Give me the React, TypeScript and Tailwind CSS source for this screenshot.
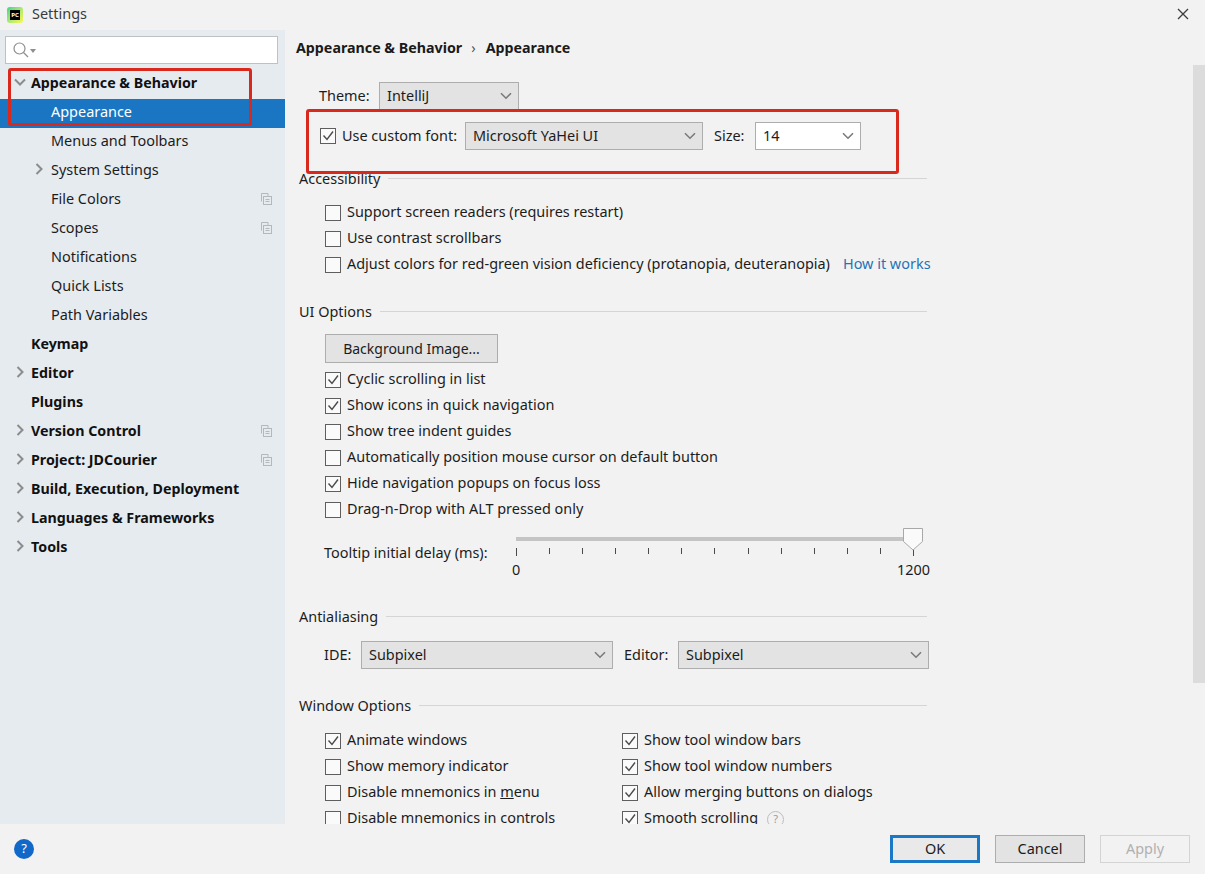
const sans = "font-['Noto_Sans','Open_Sans',sans-serif]";

type NavItem = { label: string; bold?: boolean; arrow?: "right" | "down"; indent?: boolean; copy?: boolean; selected?: boolean };

const navItems: NavItem[] = [
  { label: "Appearance & Behavior", bold: true, arrow: "down" },
  { label: "Appearance", indent: true, selected: true },
  { label: "Menus and Toolbars", indent: true },
  { label: "System Settings", indent: true, arrow: "right" },
  { label: "File Colors", indent: true, copy: true },
  { label: "Scopes", indent: true, copy: true },
  { label: "Notifications", indent: true },
  { label: "Quick Lists", indent: true },
  { label: "Path Variables", indent: true },
  { label: "Keymap", bold: true },
  { label: "Editor", bold: true, arrow: "right" },
  { label: "Plugins", bold: true },
  { label: "Version Control", bold: true, arrow: "right", copy: true },
  { label: "Project: JDCourier", bold: true, arrow: "right", copy: true },
  { label: "Build, Execution, Deployment", bold: true, arrow: "right" },
  { label: "Languages & Frameworks", bold: true, arrow: "right" },
  { label: "Tools", bold: true, arrow: "right" },
];

function Chevron({ className = "" }: { className?: string }) {
  return (
    <svg viewBox="0 0 12 8" className={`h-[8px] w-[12px] ${className}`} fill="none" stroke="#7a7a7a" strokeWidth="1.6">
      <path d="M1 1.2 6 6.2 11 1.2" />
    </svg>
  );
}

function TreeArrow({ dir }: { dir: "right" | "down" }) {
  return (
    <svg viewBox="0 0 12 12" className="h-[12px] w-[12px]" fill="none" stroke="#8c8c8c" strokeWidth="2">
      {dir === "down" ? <path d="M1 3.5 6 8.5 11 3.5" /> : <path d="M3.5 1 8.5 6 3.5 11" />}
    </svg>
  );
}

function CopyIcon() {
  return (
    <svg viewBox="0 0 12 12" className="h-[12px] w-[12px]" fill="none" stroke="#b4b8bc" strokeWidth="1">
      <path d="M1.5 8.5V.5H8V3" />
      <rect x="3.5" y="3.5" width="8" height="8" />
      <path d="M5.5 6.5h4M5.5 8.5h4" />
    </svg>
  );
}

function Check({ on }: { on?: boolean }) {
  return (
    <span className="flex h-[16px] w-[16px] shrink-0 items-center justify-center border border-[#5e5e5e] bg-[#fafafa]">
      {on && (
        <svg viewBox="0 0 14 14" className="h-[14px] w-[14px]" fill="none" stroke="#4a4a4a" strokeWidth="1.4">
          <path d="M2.5 6.5 6 10.5 12 2.5" />
        </svg>
      )}
    </span>
  );
}

function CheckRow({ label, on, className = "" }: { label: React.ReactNode; on?: boolean; className?: string }) {
  return (
    <div className={`flex h-[26px] items-center gap-[6px] whitespace-nowrap ${className}`}>
      <Check on={on} />
      <span className="pb-[2px]">{label}</span>
    </div>
  );
}

function Select({ value, className = "", white, raised }: { value: string; className?: string; white?: boolean; raised?: boolean }) {
  return (
    <div
      className={`flex h-[28px] items-center justify-between border border-[#adadad] pl-[7px] pr-[6px] ${white ? "bg-white" : "bg-[#e3e3e3]"} ${className}`}
    >
      <span className={raised ? "pb-[1px]" : ""}>{value}</span>
      <Chevron />
    </div>
  );
}

function SectionTitle({ title, className = "" }: { title: string; className?: string }) {
  return (
    <div className={`flex h-[20px] w-[628px] items-center gap-[8px] ${className}`}>
      <span className="pt-[2px]">{title}</span>
      <div className="h-px flex-1 bg-[#d5d5d5]" />
    </div>
  );
}

function FooterButton({ label, className = "" }: { label: string; className?: string }) {
  return (
    <button className={`flex h-[28px] w-[90px] items-center justify-center ${className}`}>{label}</button>
  );
}

export default function App() {
  return (
    <div className={`relative flex h-[874px] w-[1205px] flex-col overflow-hidden bg-[#f2f2f2] text-[14.45px] text-[#1c1c1c] ${sans}`}>
      <div className="flex h-[30px] shrink-0 items-center pl-[7px] pr-[16px]">
        <div className="flex h-[16px] w-[16px] items-center justify-center rounded-[3px] bg-gradient-to-br from-[#21d789] to-[#fcf84a]">
          <span className="flex h-[10px] w-[10px] items-center justify-center bg-black text-[6px] leading-none font-bold text-white">
            PC
          </span>
        </div>
        <span className="ml-[9px] pb-[2px] text-[#3a3a3a]">Settings</span>
        <svg viewBox="0 0 12 12" className="mb-[2px] ml-auto h-[12px] w-[12px]" fill="none" stroke="#3c3c3c" strokeWidth="1.3">
          <path d="M1 1 11 11M11 1 1 11" />
        </svg>
      </div>

      <div className="flex h-[794px] shrink-0 overflow-hidden">
        <aside className="flex w-[285px] shrink-0 flex-col bg-[#e6ebf0] pt-[6px]">
          <div className="mx-[5px] flex h-[28px] w-[273px] items-center gap-[1px] border border-[#bcc1c6] bg-white pl-[7px]">
            <svg viewBox="0 0 16 16" className="h-[16px] w-[16px]" fill="none" stroke="#8e8e8e" strokeWidth="1.2">
              <circle cx="6.5" cy="6.5" r="5.5" />
              <path d="M10.5 10.5 15 15" />
            </svg>
            <span className="mt-[2px] h-0 w-0 border-x-[3px] border-t-[4px] border-x-transparent border-t-[#8e8e8e]" />
          </div>
          <nav className="mt-[6px]">
            {navItems.map((item) => (
              <div
                key={item.label}
                className={`relative flex h-[29px] items-center whitespace-nowrap pb-[3px] pr-[13px] ${item.indent ? "pl-[51px]" : "pl-[31px]"} ${
                  item.selected ? "bg-[#1a76c2] text-white" : ""
                } ${item.bold ? "text-[14.25px] font-bold text-[#111111]" : ""}`}
              >
                {item.arrow && (
                  <span className={`absolute top-[6px] ${item.indent ? "left-[33px]" : "left-[14px]"}`}>
                    <TreeArrow dir={item.arrow} />
                  </span>
                )}
                <span>{item.label}</span>
                {item.copy && (
                  <span className="ml-auto">
                    <CopyIcon />
                  </span>
                )}
              </div>
            ))}
          </nav>
        </aside>

        <main className="relative min-w-0 flex-1 pl-[14px]">
          <div className="ml-[-3px] flex h-[34px] items-center pt-[1px] text-[14.25px] font-bold text-[#1a1a1a]">
            <span>Appearance &amp; Behavior</span>
            <span className="ml-[9px] mr-[10px] font-normal text-[#555555]">›</span>
            <span>Appearance</span>
          </div>

          <div className="mt-[18px] ml-[20px] flex items-center">
            <span className="w-[60px] pb-[1px]">Theme:</span>
            <Select value="IntelliJ" raised className="w-[140px]" />
          </div>
          <div className="mt-[12px] ml-[21px] flex items-center">
            <Check on />
            <span className="ml-[6px] w-[123px] pb-[1px] whitespace-nowrap">Use custom font:</span>
            <Select value="Microsoft YaHei UI" raised className="w-[238px]" />
            <span className="ml-[11px] w-[41px] pb-[1px]">Size:</span>
            <Select value="14" raised white className="w-[106px]" />
          </div>

          <SectionTitle title="Accessibility" className="mt-[18px]" />
          <div className="mt-[12px] ml-[26px]">
            <CheckRow label="Support screen readers (requires restart)" />
            <CheckRow label="Use contrast scrollbars" />
            <div className="flex items-center">
              <CheckRow label="Adjust colors for red-green vision deficiency (protanopia, deuteranopia)" />
              <span className="ml-[13px] pb-[2px] text-[#1f74b8]">How it works</span>
            </div>
          </div>

          <SectionTitle title="UI Options" className="mt-[23px]" />
          <button className="mt-[13px] ml-[26px] flex h-[29px] w-[173px] items-center justify-center border border-[#adadad] bg-[#e3e3e3] text-[14px]">
            Background Image...
          </button>
          <div className="mt-[4px] ml-[26px]">
            <CheckRow on label="Cyclic scrolling in list" />
            <CheckRow on label="Show icons in quick navigation" />
            <CheckRow label="Show tree indent guides" />
            <CheckRow label="Automatically position mouse cursor on default button" />
            <CheckRow on label="Hide navigation popups on focus loss" />
            <CheckRow label="Drag-n-Drop with ALT pressed only" />
          </div>

          <div className="mt-[4px] ml-[25px] flex">
            <span className="mt-[15px] w-[192px] whitespace-nowrap">Tooltip initial delay (ms):</span>
            <div className="relative h-[52px] w-[413px]">
              <div className="absolute top-[10px] left-0 h-[4px] w-[396px] bg-[#c4c4c4]" />
              <div className="absolute top-[21px] left-0 flex w-[398px] items-start justify-between">
                {Array.from({ length: 13 }).map((_, i) => (
                  <span
                    key={i}
                    className={`w-px bg-[#4a4a4a] ${i === 0 || i === 12 ? "h-[8px]" : "h-[6px]"}`}
                  />
                ))}
              </div>
              <svg viewBox="0 0 20 23" className="absolute top-[1px] left-[387px] h-[23px] w-[20px]" fill="#fafafa" stroke="#a8a8a8">
                <path d="M.5.5h19v13l-9.5 8.5L.5 13.5z" />
              </svg>
              <span className="absolute top-[33px] left-[-4px] leading-[20px]">0</span>
              <span className="absolute top-[33px] left-[381px] leading-[20px]">1200</span>
            </div>
          </div>

          <SectionTitle title="Antialiasing" className="mt-[27px]" />
          <div className="mt-[15px] ml-[25px] flex items-center">
            <span className="w-[37px]">IDE:</span>
            <Select value="Subpixel" className="w-[252px]" />
            <span className="ml-[11px] w-[54px]">Editor:</span>
            <Select value="Subpixel" className="w-[251px]" />
          </div>

          <SectionTitle title="Window Options" className="mt-[26px]" />
          <div className="mt-[13px] ml-[26px] flex">
            <div className="w-[297px]">
              <CheckRow on label="Animate windows" />
              <CheckRow label="Show memory indicator" />
              <CheckRow
                label={
                  <>
                    Disable mnemonics in <span className="underline">m</span>enu
                  </>
                }
              />
              <CheckRow label="Disable mnemonics in controls" />
            </div>
            <div>
              <CheckRow on label="Show tool window bars" />
              <CheckRow on label="Show tool window numbers" />
              <CheckRow on label="Allow merging buttons on dialogs" />
              <div className="flex items-center">
                <CheckRow on label="Smooth scrolling" />
                <span className="ml-[9px] flex h-[17px] w-[17px] items-center justify-center rounded-full border border-[#bdbdbd] text-[11px] text-[#9a9a9a]">
                  ?
                </span>
              </div>
            </div>
          </div>

          <div className="absolute top-[35px] right-0 h-[618px] w-[12px] bg-[#dcdcdc]" />
        </main>
      </div>

      <footer className="flex h-[50px] shrink-0 items-center pr-[15px] pl-[14px]">
        <span className="flex h-[20px] w-[20px] items-center justify-center rounded-full bg-[#1068c8] text-[13px] text-white">?</span>
        <FooterButton label="OK" className="mt-[-1px] ml-auto border-[3px] border-[#1a78c4] bg-[#e9e9e9]" />
        <FooterButton label="Cancel" className="mt-[-1px] ml-[15px] border border-[#adadad] bg-[#e3e3e3]" />
        <FooterButton label="Apply" className="mt-[-1px] ml-[15px] border border-[#d4d4d4] text-[#b0b0b0]" />
      </footer>

      <div className="pointer-events-none absolute top-[68px] left-[8px] h-[58px] w-[244px] rounded-[3px] border-[3px] border-[#d9281c]" />
      <div className="pointer-events-none absolute top-[109px] left-[306px] h-[65px] w-[593px] rounded-[3px] border-[3px] border-[#d9281c]" />
    </div>
  );
}
